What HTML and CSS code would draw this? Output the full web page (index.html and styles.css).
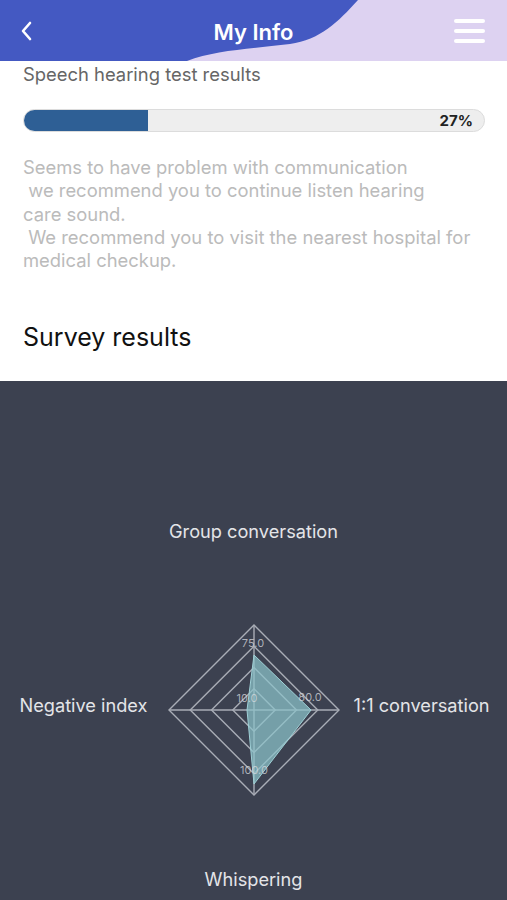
FILE: index.html
```html
<!DOCTYPE html>
<html lang="en">
<head>
<meta charset="utf-8">
<title>My Info</title>
<link rel="stylesheet" href="styles.css">
</head>
<body>
<header class="topbar">
  <svg class="topbar-bg" viewBox="0 0 507 61" preserveAspectRatio="none" aria-hidden="true">
    <path d="M0 0 H358 C338 22 320 40 290 44 C250 49 215 50 187 61 H0 Z" fill="#4459c2"/>
  </svg>
  <button class="back" aria-label="Back">
    <svg width="14" height="20" viewBox="0 0 14 20"><path d="M10 2 L3 10 L10 18" fill="none" stroke="#fff" stroke-width="2.6" stroke-linecap="round" stroke-linejoin="round"/></svg>
  </button>
  <h1 class="title">My Info</h1>
  <button class="menu" aria-label="Menu">
    <span></span><span></span><span></span>
  </button>
</header>

<main class="content">
  <h2 class="section-label">Speech hearing test results</h2>
  <div class="progress">
    <div class="progress-fill" style="width:27%"></div>
    <span class="progress-value">27%</span>
  </div>
  <p class="advice">Seems to have problem with communication<br>&nbsp;we recommend you to continue listen hearing<br>care sound.<br>&nbsp;We recommend you to visit the nearest hospital for<br>medical checkup.</p>
  <h2 class="survey-title">Survey results</h2>
</main>

<section class="chart-panel">
  <div class="radar">
    <div class="axis-label top">Group conversation</div>
    <div class="axis-label left">Negative index</div>
    <svg class="radar-svg" width="200" height="200" viewBox="0 0 200 200">
      <g fill="none" stroke="#a9adb6" stroke-width="1.4">
        <polygon points="100,15 185,100 100,185 15,100"/>
        <polygon points="100,36.25 163.75,100 100,163.75 36.25,100"/>
        <polygon points="100,57.5 142.5,100 100,142.5 57.5,100"/>
        <polygon points="100,78.75 121.25,100 100,121.25 78.75,100"/>
        <line x1="100" y1="15" x2="100" y2="185"/>
        <line x1="15" y1="100" x2="185" y2="100"/>
      </g>
      <polygon points="100,45 157,100 100,174 93,100" fill="#8cc3cb" fill-opacity="0.72" stroke="#9fd0d6" stroke-width="1"/>
      <g class="val" font-size="11" fill="#d4d7dc" fill-opacity="0.75" text-anchor="middle">
        <text x="99" y="37">75.0</text>
        <text x="93" y="92">10.0</text>
        <text x="156" y="91">80.0</text>
        <text x="100" y="164">100.0</text>
      </g>
    </svg>
    <div class="axis-label right">1:1 conversation</div>
    <div class="axis-label bottom">Whispering</div>
  </div>
</section>
</body>
</html>
```
FILE: styles.css
```css
* { box-sizing: border-box; }
html, body { margin: 0; padding: 0; }
body {
  width: 507px;
  min-height: 900px;
  font-family: "Inter", "Liberation Sans", sans-serif;
  background: #ffffff;
  display: flex;
  flex-direction: column;
}

.topbar {
  position: relative;
  height: 61px;
  background: #ddd2f1;
  display: grid;
  grid-template-columns: 60px 1fr 60px;
  align-items: center;
}
.topbar-bg {
  position: absolute;
  left: 0; top: 0;
  width: 100%; height: 100%;
}
.back, .menu {
  position: relative;
  background: none;
  border: 0;
  padding: 0;
  cursor: pointer;
}
.back {
  justify-self: start;
  margin-left: 20px;
  margin-top: 1px;
  display: flex;
}
.title {
  position: relative;
  margin: 0;
  text-align: center;
  color: #ffffff;
  font-size: 22px;
  font-weight: 600;
  padding-top: 2px;
}
.menu {
  justify-self: end;
  margin-right: 22px;
  width: 31px;
  display: flex;
  flex-direction: column;
  gap: 6px;
}
.menu span {
  display: block;
  height: 4px;
  border-radius: 2px;
  background: #ffffff;
}

.content {
  padding: 2px 22px 0 23px;
  height: 320px;
}
.section-label {
  margin: 0;
  font-size: 18.4px;
  line-height: 22px;
  font-weight: 400;
  color: #666666;
}
.progress {
  position: relative;
  margin-top: 24px;
  height: 23px;
  border-radius: 12px;
  background: #eeeeee;
  border: 1px solid #dcdcdc;
  overflow: hidden;
  display: flex;
  align-items: center;
  justify-content: flex-end;
}
.progress-fill {
  position: absolute;
  left: 0; top: 0; bottom: 0;
  background: #2e5f95;
}
.progress-value {
  position: relative;
  font-size: 15px;
  font-weight: 700;
  color: #222222;
  padding-right: 11px;
}
.advice {
  margin: 24px 0 0;
  font-size: 18.4px;
  line-height: 23.3px;
  color: #bbbbbb;
}
.survey-title {
  margin: 50px 0 0;
  font-size: 25px;
  font-weight: 400;
  color: #111111;
  line-height: 30px;
}

.chart-panel {
  flex: 1;
  background: #3c4150;
  padding-top: 138px;
  padding-bottom: 9px;
}
.radar {
  display: grid;
  grid-template-columns: 1fr 200px 1fr;
  grid-template-rows: auto auto auto;
  align-items: center;
}
.axis-label {
  font-size: 18.2px;
  line-height: 24px;
  color: #e4e5e8;
  white-space: nowrap;
}
.axis-label.top {
  grid-column: 2;
  grid-row: 1;
  justify-self: center;
  margin-bottom: 67px;
}
.axis-label.left {
  grid-column: 1;
  grid-row: 2;
  justify-self: end;
  margin-right: 6px;
  margin-bottom: 10px;
}
.axis-label.right {
  grid-column: 3;
  grid-row: 2;
  justify-self: start;
  margin-left: 0px;
  margin-bottom: 10px;
}
.axis-label.bottom {
  grid-column: 2;
  grid-row: 3;
  justify-self: center;
  margin-top: 57px;
}
.radar-svg {
  grid-column: 2;
  grid-row: 2;
  display: block;
}
.val text {
  font-family: "Inter", "Liberation Sans", sans-serif;
}
```
